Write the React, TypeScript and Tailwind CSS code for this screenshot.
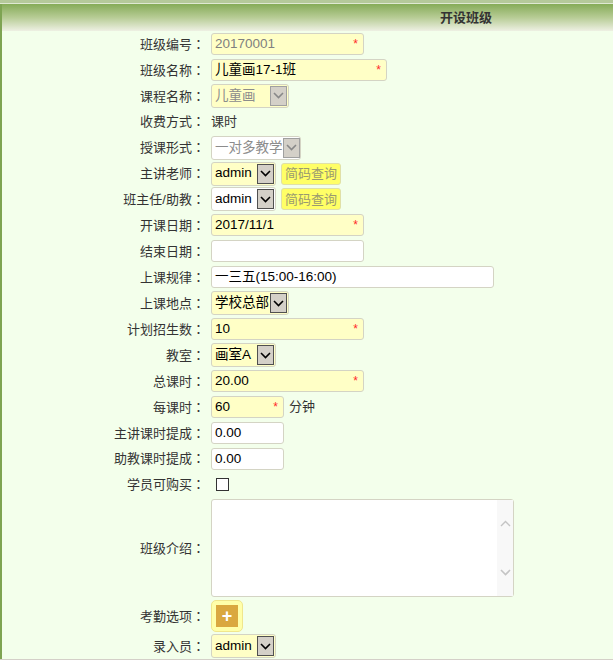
import type { ReactNode } from "react";

const FONT = '"Liberation Sans", "Noto Sans CJK SC", sans-serif';

function Chevron({ color = "#000" }: { color?: string }) {
  return (
    <svg width="11" height="7" viewBox="0 0 11 7" fill="none">
      <path d="M1 1l4.5 4.5L10 1" stroke={color} strokeWidth="1.6" />
    </svg>
  );
}

function Row({ label, children, h = "h-[26px]" }: { label: string; children?: ReactNode; h?: string }) {
  return (
    <div className={`flex items-center ${h}`}>
      <div className="w-[203px] shrink-0 text-right text-[#333]">
        {label}
        <span style={{ fontFamily: '"Noto Sans CJK JP", sans-serif' }}>：</span>
      </div>
      <div className="ml-[6px] flex items-center gap-[5px]">{children}</div>
    </div>
  );
}

function TextBox({
  value = "",
  w,
  yellow,
  star,
  muted,
}: {
  value?: string;
  w: string;
  yellow?: boolean;
  star?: boolean;
  muted?: boolean;
}) {
  return (
    <div
      className={`relative flex h-[22px] items-center rounded-[3px] border border-[#d4d4c4] pl-[3px] text-[13.5px] ${w} ${
        yellow ? "bg-[#ffffc6]" : "bg-white"
      } ${muted ? "text-[#808080]" : "text-black"}`}
    >
      {value}
      {star && <span className="absolute right-[5px] top-[4px] text-[12px] leading-none text-[#ff2a2a]">*</span>}
    </div>
  );
}

function Select({
  value,
  w,
  yellow,
  disabled,
}: {
  value: string;
  w: string;
  yellow?: boolean;
  disabled?: boolean;
}) {
  return (
    <div
      className={`flex h-[24px] items-center justify-between rounded-[3px] border border-[#d4d4c4] pl-[3px] pr-[1px] text-[13.5px] ${w} ${
        yellow ? "bg-[#ffffc6]" : "bg-white"
      } ${disabled ? "text-[#8c8c8c]" : "text-black"}`}
    >
      <span className="whitespace-nowrap">{value}</span>
      <span
        className={`flex h-[20px] w-[17px] shrink-0 items-center justify-center border bg-[#d4d0c8] ${
          disabled ? "border-[#a0a0a0]" : "border-[#505050]"
        }`}
      >
        <Chevron color={disabled ? "#888" : "#000"} />
      </span>
    </div>
  );
}

function CodeButton() {
  return (
    <div className="flex h-[22px] w-[60px] items-center justify-center rounded-[3px] border border-[#e0e0a8] bg-[#ffff66] text-[#9a9a70]">
      简码查询
    </div>
  );
}

export default function App() {
  return (
    <div className="h-[660px] w-[613px] overflow-hidden bg-[#f3ffeb] text-[13px]" style={{ fontFamily: FONT }}>
      <div className="h-[3px] bg-[#b5c99a]" />
      <div className="h-px bg-[#dfe8d2]" />
      <div className="flex h-[655px] flex-col border-l-2 border-[#7ea452]">
        <div className="flex h-[27px] items-center bg-gradient-to-b from-[#86ab57] via-[#b7cc95] to-[#eef0e3] pl-[438px] font-bold text-[#333]">
          开设班级
        </div>

        <div className="flex flex-1 flex-col overflow-hidden">
          <Row label="班级编号">
            <TextBox value="20170001" w="w-[153px]" yellow star muted />
          </Row>
          <Row label="班级名称">
            <TextBox value="儿童画17-1班" w="w-[176px]" yellow star />
          </Row>
          <Row label="课程名称">
            <Select value="儿童画" w="w-[78px]" yellow disabled />
          </Row>
          <Row label="收费方式">
            <span className="text-[#333]">课时</span>
          </Row>
          <Row label="授课形式">
            <Select value="一对多教学" w="w-[90px]" disabled />
          </Row>
          <Row label="主讲老师">
            <Select value="admin" w="w-[65px]" yellow />
            <CodeButton />
          </Row>
          <Row label="班主任/助教">
            <Select value="admin" w="w-[65px]" />
            <CodeButton />
          </Row>
          <Row label="开课日期">
            <TextBox value="2017/11/1" w="w-[153px]" yellow star />
          </Row>
          <Row label="结束日期">
            <TextBox w="w-[153px]" />
          </Row>
          <Row label="上课规律">
            <TextBox value="一三五(15:00-16:00)" w="w-[283px]" />
          </Row>
          <Row label="上课地点">
            <Select value="学校总部" w="w-[78px]" yellow />
          </Row>
          <Row label="计划招生数">
            <TextBox value="10" w="w-[153px]" yellow star />
          </Row>
          <Row label="教室">
            <Select value="画室A" w="w-[65px]" yellow />
          </Row>
          <Row label="总课时">
            <TextBox value="20.00" w="w-[153px]" yellow star />
          </Row>
          <Row label="每课时">
            <TextBox value="60" w="w-[73px]" yellow star />
            <span className="text-[#333]">分钟</span>
          </Row>
          <Row label="主讲课时提成">
            <TextBox value="0.00" w="w-[73px]" />
          </Row>
          <Row label="助教课时提成">
            <TextBox value="0.00" w="w-[73px]" />
          </Row>
          <Row label="学员可购买">
            <span className="ml-[5px] block h-[13px] w-[13px] border border-[#333] bg-white" />
          </Row>
          <Row label="班级介绍" h="h-[102px]">
            <div className="flex h-[98px] w-[303px] rounded-[3px] border border-[#d4d4c4] bg-white">
              <div className="flex-1" />
              <div className="flex w-[16px] flex-col items-center justify-between bg-[#f8f8f8] py-[20px]">
                <svg width="11" height="7" viewBox="0 0 11 7" fill="none">
                  <path d="M1 6l4.5-4.5L10 6" stroke="#c4c4c4" strokeWidth="1.4" />
                </svg>
                <Chevron color="#c4c4c4" />
              </div>
            </div>
          </Row>
          <Row label="考勤选项" h="h-[34px]">
            <div className="flex h-[32px] w-[32px] items-center justify-center rounded-[5px] border border-[#f0e68c] bg-[#ffffaa]">
              <div className="flex h-[22px] w-[22px] items-center justify-center bg-[#daa83f] text-[18px] font-bold leading-none text-white">
                +
              </div>
            </div>
          </Row>
          <Row label="录入员">
            <Select value="admin" w="w-[65px]" yellow />
          </Row>
        </div>
      </div>
      <div className="h-[3px] bg-[#d4d0c8]" />
    </div>
  );
}
